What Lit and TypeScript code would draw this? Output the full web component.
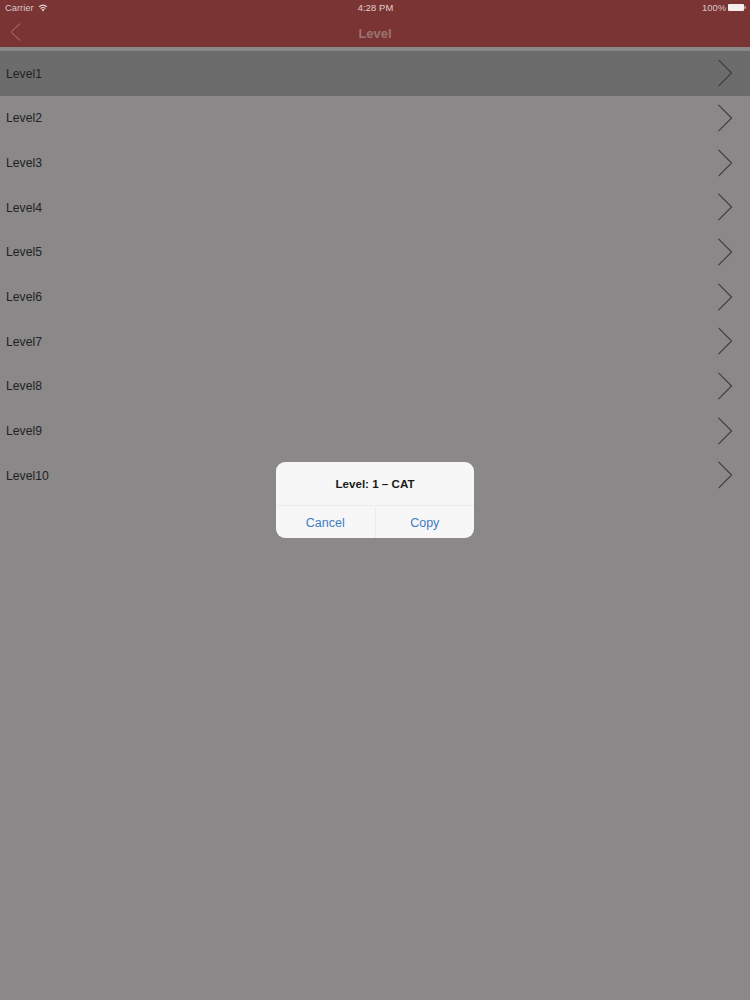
import { LitElement, html, css, svg } from "lit";
import { customElement } from "lit/decorators.js";

const LEVELS = ["Level1","Level2","Level3","Level4","Level5","Level6","Level7","Level8","Level9","Level10"];

@customElement("app-root")
export class AppRoot extends LitElement {
  static styles = css`
    :host { display: block; position: relative; width: 750px; height: 1000px; overflow: hidden;
      background: #8a8889; font-family: "Liberation Sans", Arial, sans-serif; }
    .nav { height: 47px; background: #7a3433; display: flex; flex-direction: column; }
    .status { height: 15px; display: flex; align-items: center; padding: 0 4px 0 5px; color: #d9c8c7; font-size: 9.4px; }
    .status-left, .status-right { flex: 1; display: flex; align-items: center; gap: 4px; }
    .status-right { justify-content: flex-end; gap: 2px; }
    .time { font-weight: 400; letter-spacing: 0.1px; color: #e0d2d1; }
    .title-bar { flex: 1; position: relative; display: flex; align-items: center; justify-content: center; }
    .title { font-size: 13px; font-weight: 700; color: #9a7372; padding-top: 5px; }
    .back { position: absolute; left: 10px; top: 7px; }
    .list { padding-top: 4px; }
    .row { height: 44.67px; box-sizing: border-box; display: flex; align-items: center; justify-content: space-between;
      padding: 0 17px 0 6px; font-size: 12.2px; color: #222222; }
    .row span { padding-top: 1px; }
    .row.active { background: #6d6c6d; }
    .chev { display: block; }
    .dialog { position: absolute; left: 276px; top: 462px; width: 198px; height: 76px; border-radius: 9px;
      background: #f8f7f8; display: flex; flex-direction: column; overflow: hidden; }
    .msg { height: 44px; display: flex; align-items: center; justify-content: center; font-size: 11.6px; font-weight: 700;
      color: #1a1a1a; border-bottom: 1px solid #ecebe8; box-sizing: border-box; }
    .actions { flex: 1; display: flex; padding-top: 1px; }
    .actions div { flex: 1; display: flex; align-items: center; justify-content: center; font-size: 12.5px; color: #3f7cc4; }
    .actions div + div { border-left: 1px solid #ecebe8; }
  `;

  render() {
    return html`
      <div class="nav">
        <div class="status">
          <div class="status-left">
            <span>Carrier</span>
            <svg width="10" height="8" viewBox="0 0 10 8">
              <path d="M5 7.6 L3.4 5.6 A2.6 2.6 0 0 1 6.6 5.6 Z" fill="#e6dada"/>
              <path d="M2.5 4.5 A4 4 0 0 1 7.5 4.5 M1 2.8 A6.2 6.2 0 0 1 9 2.8" fill="none" stroke="#e6dada" stroke-width="1.1"/>
            </svg>
          </div>
          <span class="time">4:28 PM</span>
          <div class="status-right">
            <span>100%</span>
            <svg width="18" height="7" viewBox="0 0 18 7">
              <rect x="0" y="0" width="16" height="7" rx="1" fill="#f4eeee"/>
              <rect x="16.5" y="2.2" width="1.2" height="2.6" fill="#e6dada"/>
            </svg>
          </div>
        </div>
        <div class="title-bar">
          <svg class="back" width="11" height="20" viewBox="0 0 11 20">
            <path d="M10 1.5 L1.2 10 L10 18.5" fill="none" stroke="#a67f7d" stroke-width="1"/>
          </svg>
          <span class="title">Level</span>
        </div>
      </div>
      <div class="list">
        ${LEVELS.map((l, i) => html`
          <div class="row ${i === 0 ? "active" : ""}">
            <span>${l}</span>
            <svg class="chev" width="16" height="28" viewBox="0 0 16 28">
              ${svg`<path d="M1.5 0.8 L14.6 14 L1.5 27.2" fill="none" stroke="#3c3c3e" stroke-width="1.1"/>`}
            </svg>
          </div>`)}
      </div>
      <div class="dialog">
        <div class="msg">Level: 1 – CAT</div>
        <div class="actions"><div>Cancel</div><div>Copy</div></div>
      </div>
    `;
  }
}
